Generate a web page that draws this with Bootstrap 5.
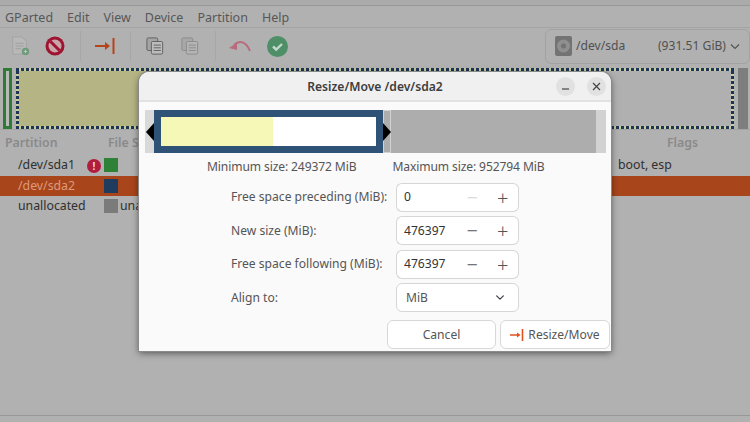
<!DOCTYPE html>
<html lang="en">
<head>
  <meta charset="UTF-8">
  <title>GParted</title>
  <link href="https://cdn.jsdelivr.net/npm/bootstrap@5.3.0/dist/css/bootstrap.min.css" rel="stylesheet">
  <style>
    html, body { height: 100%; }
    body { background: #b1b1b1; font-family: "Noto Sans", "Open Sans", sans-serif; font-size: 12.1px; color: #3a3a3a; overflow: hidden; }
    .app-shell { position: relative; width: 750px; height: 422px; overflow: hidden; }
    .title-strip { height: 6px; background: #ababab; border-bottom: 1px solid #989898; }
    .menu-strip { height: 22px; gap: 14px; padding: 3px 0 0 5px; border-bottom: 1px solid #a4a4a4; color: #575757; font-size: 12.5px; }
    .tool-strip { height: 39px; padding-bottom: 3px; }
    .tool-slot { width: 35px; height: 36px; }
    .tool-first { margin-left: 2.5px; }
    .tool-last { margin-left: 2px; }
    .tool-sep { width: 1px; height: 30px; background: #a7a7a7; margin: 0 7px; }
    .disk-picker { width: 205px; height: 35px; padding: 0 9px; border: 1px solid #a2a2a2; border-radius: 6px; color: #505050; }
    .graph-strip { height: 62px; padding: 1px 2px 0 3px; gap: 4px; }
    .part-small { width: 9px; border: 3px solid #2f7a34; background: #b9b9b9; }
    .part-main { flex: 1; padding: 3px; background:
      repeating-linear-gradient(90deg, #1d3557 0 3px, #c9cc9c 3px 5px) top / 100% 3px no-repeat,
      repeating-linear-gradient(90deg, #1d3557 0 3px, #c9cc9c 3px 5px) bottom / 100% 3px no-repeat,
      repeating-linear-gradient(0deg, #1d3557 0 3px, #c9cc9c 3px 5px) left / 3px 100% no-repeat,
      repeating-linear-gradient(0deg, #1d3557 0 3px, #c9cc9c 3px 5px) right / 3px 100% no-repeat; }
    .part-used { width: 340px; background: #b5b484; }
    .part-free { flex: 1; background: #b0b0b0; }
    .part-end { width: 10px; background: #7e7e7e; }
    .tbl-head { height: 26px; padding-top: 2px; font-weight: 600; color: #8a8a8a; border-top: 1px solid #a5a5a5; font-size: 12.3px; }
    .tbl-row { height: 20.5px; color: #2f2f2f; font-size: 12.3px; }
    .tbl-row.is-picked { background: #a8451b; color: #dd9a7c; }
    .col-part { width: 104px; padding-left: 18px; position: relative; }
    .col-head-part { width: 108px; padding-left: 5px; }
    .col-fs { width: 498px; }
    .col-head-fs { width: 559px; }
    .swatch { width: 14px; height: 14px; margin-right: 2px; flex: none; }
    .warn-dot { position: absolute; left: 87px; top: 3px; width: 14px; height: 14px; border-radius: 50%; background: #b31d3d; color: #f3d6dc; font-size: 10px; font-weight: 700; line-height: 14px; text-align: center; }
    .foot-line { position: absolute; left: 0; right: 0; top: 415px; height: 1px; background: #989898; }

    .dlg { position: absolute; left: 139px; top: 72px; width: 472px; height: 279px; background: #fafafa; border-radius: 10px 10px 0 0; box-shadow: 0 0 0 1px #8a8a8a, 0 2px 7px rgba(0,0,0,.55); }
    .dlg-head { height: 30px; padding-top: 3px; background: #f0f0f0; border-bottom: 2px solid #e2e2e2; border-radius: 10px 10px 0 0; font-weight: 600; color: #3d3d3d; position: relative; }
    .win-btn { position: absolute; top: 5px; width: 19px; height: 19px; border-radius: 50%; background: #e1e1e1; }
    .resizer { position: relative; margin: 8px 5px 0 6px; height: 43px; background: #adadad; }
    .rz-lead { width: 9px; background: #d9d9d9; }
    .rz-part { width: 229px; background: #2f5377; padding: 7px; }
    .rz-inner { height: 100%; background: #fff; }
    .rz-used { width: 112px; height: 100%; background: #f6f8b8; }
    .rz-gap { width: 8px; background: #adadad; border: 1px solid #d2d2d2; }
    .rz-tail { width: 10px; background: #d2d2d2; }
    .rz-arrow { position: absolute; top: 13px; width: 0; height: 0; border-top: 9px solid transparent; border-bottom: 9px solid transparent; }
    .rz-arrow-l { left: 1px; border-right: 8px solid #000; }
    .rz-arrow-r { left: 238px; border-left: 8px solid #000; }
    .limits { margin-top: 5px; height: 17px; color: #555; padding-left: 68px; gap: 36px; line-height: 17px; letter-spacing: -.12px; }
    .form-rows { margin-top: 8px; padding-left: 92px; gap: 4.4px; }
    .form-line { height: 29px; }
    .form-line label { width: 165px; color: #555; }
    .spin-box { width: 123px; height: 29px; flex-wrap: nowrap; }
    .spin-box .form-control, .spin-box .btn, .align-pick { font-size: 12.1px; border-color: #d6d6d6; color: #333; background-color: #fff; }
    .spin-box .form-control { padding: 0 0 0 7px; min-width: 0; width: 62px; flex: none; border-right: 1px solid #ececec; border-radius: 6px 0 0 6px; box-shadow: none; }
    .spin-box .btn { width: 31.5px; padding: 0; font-size: 20px; line-height: 25px; font-weight: 300; border-left: 0; color: #555; border-radius: 0; }
    .spin-box .btn:last-child { border-radius: 0 6px 6px 0; }
    .spin-box .btn:first-of-type { border-right: 1px solid #ececec; }
    .spin-box .btn:disabled { opacity: 1; color: #d5d5d5; border-color: #d6d6d6; }
    .align-pick { width: 123px; height: 29px; padding: 0 9px; border-radius: 6px; color: #555; background-size: 12px 9px; }
    .dlg-actions { margin-top: 8px; padding-left: 248px; gap: 4px; }
    .dlg-btn { height: 29px; width: 109px; padding: 0; font-size: 12.1px; color: #555; background: #fff; border: 1px solid #d8d8d8; border-radius: 6px; }
    .dlg-btn-wide { width: 110px; }
  </style>
</head>
<body>
  <div class="app-shell">
    <div class="title-strip"></div>
    <div class="menu-strip d-flex align-items-center">
      <span>GParted</span><span>Edit</span><span>View</span><span>Device</span><span>Partition</span><span>Help</span>
    </div>
    <div class="tool-strip d-flex align-items-center">
      <div class="tool-slot tool-first d-flex align-items-center justify-content-center">
        <svg width="20" height="20" viewBox="0 0 22 22" fill="none"><path d="M3 1h10l5 5v14H3z" fill="#b8b8b8" stroke="#a2a2a2"/><path d="M6 8h9M6 11h9M6 14h6" stroke="#9c9c9c"/><circle cx="17" cy="17" r="4" fill="#6b9a78"/><path d="M15 17h4M17 15v4" stroke="#c8c8c8"/></svg>
      </div>
      <div class="tool-slot d-flex align-items-center justify-content-center">
        <svg width="20" height="20" viewBox="0 0 20 20"><circle cx="10" cy="10" r="9.5" fill="#9e1430"/><circle cx="10" cy="10" r="6.5" fill="#c8a4ab"/><path d="M5.5 5.5l9 9" stroke="#9e1430" stroke-width="3"/></svg>
      </div>
      <div class="tool-sep"></div>
      <div class="tool-slot d-flex align-items-center justify-content-center">
        <svg width="20" height="18" viewBox="0 0 20 18" fill="none"><path d="M0 9h14" stroke="#b6431a" stroke-width="2"/><path d="M10 5l5 4-5 4z" fill="#b6431a"/><path d="M18.5 1v16" stroke="#b6431a" stroke-width="2"/></svg>
      </div>
      <div class="tool-sep"></div>
      <div class="tool-slot d-flex align-items-center justify-content-center">
        <svg width="18" height="20" viewBox="0 0 20 20" fill="none" stroke="#5c5c5c"><rect x="1" y="1" width="12" height="14" rx="1.5" fill="#a4a4a4"/><rect x="6" y="5" width="12.5" height="14" rx="1.5" fill="#bcbcbc"/><path d="M8.5 9h8M8.5 12h8M8.5 15h8"/></svg>
      </div>
      <div class="tool-slot d-flex align-items-center justify-content-center">
        <svg width="18" height="20" viewBox="0 0 20 20" fill="none" stroke="#8a8a8a"><rect x="1" y="1" width="12" height="14" rx="1.5" fill="#a8a8a8"/><rect x="6" y="5" width="12.5" height="14" rx="1.5" fill="#b4b4b4"/><path d="M8.5 9h8M8.5 12h8M8.5 15h8"/></svg>
      </div>
      <div class="tool-sep"></div>
      <div class="tool-slot d-flex align-items-center justify-content-center">
        <svg width="23" height="14" viewBox="0 0 23 14" fill="none"><path d="M5 6c5-5 12-4 16 6" stroke="#b96a7c" stroke-width="2"/><path d="M0 9l8-5v7z" fill="#b96a7c"/></svg>
      </div>
      <div class="tool-slot tool-last d-flex align-items-center justify-content-center">
        <svg width="21" height="21" viewBox="0 0 21 21"><circle cx="10.5" cy="10.5" r="10.5" fill="#4e8f67"/><path d="M6 10.5l3.2 3 5.8-5.5" fill="none" stroke="#c4d8cb" stroke-width="2.4"/></svg>
      </div>
      <div class="disk-picker d-flex align-items-center ms-auto">
        <svg class="me-1" width="17" height="20" viewBox="0 0 17 20"><rect width="17" height="20" rx="2" fill="#737373"/><circle cx="8.5" cy="10" r="6.5" fill="#8f8f8f"/><circle cx="8.5" cy="10" r="2.5" fill="#737373"/></svg>
        <span>/dev/sda</span>
        <span class="ms-auto">(931.51 GiB)</span>
        <svg class="ms-1" width="10" height="7" viewBox="0 0 10 7" fill="none"><path d="M1 1.5l4 4 4-4" stroke="#555" stroke-width="1.2"/></svg>
      </div>
    </div>
    <div class="graph-strip d-flex">
      <div class="part-small"></div>
      <div class="part-main d-flex"><div class="part-used"></div><div class="part-free"></div></div>
      <div class="part-end"></div>
    </div>
    <div class="tbl-head d-flex align-items-center">
      <div class="col-head-part">Partition</div>
      <div class="col-head-fs">File System</div>
      <div>Flags</div>
    </div>
    <div class="tbl-row d-flex align-items-center">
      <div class="col-part">/dev/sda1<span class="warn-dot">!</span></div>
      <div class="swatch" style="background:#2f8136"></div>
      <div class="col-fs"></div>
      <div>boot, esp</div>
    </div>
    <div class="tbl-row is-picked d-flex align-items-center">
      <div class="col-part">/dev/sda2</div>
      <div class="swatch" style="background:#1f3c5e"></div>
      <div class="col-fs"></div>
    </div>
    <div class="tbl-row d-flex align-items-center">
      <div class="col-part">unallocated</div>
      <div class="swatch" style="background:#7b7b7b"></div>
      <div class="col-fs">unallocated</div>
    </div>
    <div class="foot-line"></div>

    <div class="dlg">
      <div class="dlg-head d-flex align-items-center justify-content-center">
        Resize/Move /dev/sda2
        <span class="win-btn d-flex align-items-center justify-content-center" style="left:417px"><svg width="9" height="9" viewBox="0 0 9 9"><path d="M1 7h7" stroke="#444" stroke-width="1.2"/></svg></span>
        <span class="win-btn d-flex align-items-center justify-content-center" style="left:448px"><svg width="9" height="9" viewBox="0 0 9 9"><path d="M1 1l7 7M8 1l-7 7" stroke="#444" stroke-width="1.2"/></svg></span>
      </div>
      <div class="resizer d-flex">
        <div class="rz-lead"></div>
        <div class="rz-part"><div class="rz-inner"><div class="rz-used"></div></div></div>
        <div class="rz-gap"></div>
        <div class="flex-grow-1"></div>
        <div class="rz-tail"></div>
        <span class="rz-arrow rz-arrow-l"></span>
        <span class="rz-arrow rz-arrow-r"></span>
      </div>
      <div class="limits d-flex">
        <span>Minimum size: 249372 MiB</span>
        <span>Maximum size: 952794 MiB</span>
      </div>
      <div class="form-rows d-flex flex-column">
        <div class="form-line d-flex align-items-center">
          <label>Free space preceding (MiB):</label>
          <div class="input-group spin-box">
            <input class="form-control" type="text" value="0">
            <button class="btn" type="button" disabled>−</button>
            <button class="btn" type="button">+</button>
          </div>
        </div>
        <div class="form-line d-flex align-items-center">
          <label>New size (MiB):</label>
          <div class="input-group spin-box">
            <input class="form-control" type="text" value="476397">
            <button class="btn" type="button">−</button>
            <button class="btn" type="button">+</button>
          </div>
        </div>
        <div class="form-line d-flex align-items-center">
          <label>Free space following (MiB):</label>
          <div class="input-group spin-box">
            <input class="form-control" type="text" value="476397">
            <button class="btn" type="button">−</button>
            <button class="btn" type="button">+</button>
          </div>
        </div>
        <div class="form-line d-flex align-items-center">
          <label>Align to:</label>
          <select class="form-select align-pick"><option>MiB</option></select>
        </div>
      </div>
      <div class="dlg-actions d-flex">
        <button class="btn dlg-btn" type="button">Cancel</button>
        <button class="btn dlg-btn dlg-btn-wide d-flex align-items-center justify-content-center" type="button">
          <svg class="me-1" width="14" height="12" viewBox="0 0 14 12" fill="none"><path d="M0 6h9" stroke="#e0511e" stroke-width="1.5"/><path d="M7 3.5l3.5 2.5L7 8.5z" fill="#e0511e"/><path d="M12.5 0v12" stroke="#e0511e" stroke-width="1.6"/></svg>Resize/Move
        </button>
      </div>
    </div>
  </div>
  <script src="https://cdn.jsdelivr.net/npm/bootstrap@5.3.0/dist/js/bootstrap.bundle.min.js"></script>
</body>
</html>
